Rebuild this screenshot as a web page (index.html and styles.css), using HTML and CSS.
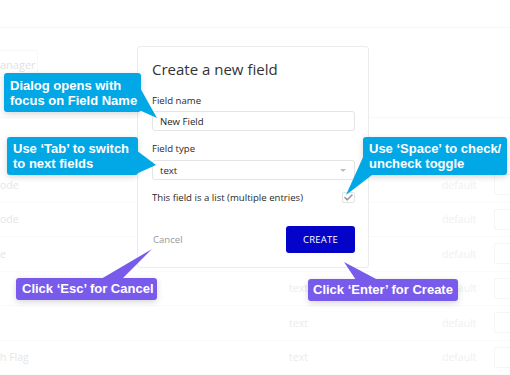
FILE: index.html
```html
<!DOCTYPE html>
<html>
<head>
<meta charset="utf-8">
<link rel="stylesheet" href="styles.css">
</head>
<body>
<div class="app">
  <div class="topbar"></div>
  <div class="filter"><span class="filter-box">anager</span></div>
  <div class="divider"></div>
  <div class="table">
    <div class="row"><span class="c-name">ode</span><span class="c-type">text</span><span class="c-def">default</span><span class="c-box"></span></div>
    <div class="row"><span class="c-name">ode</span><span class="c-type">text</span><span class="c-def">default</span><span class="c-box"></span></div>
    <div class="row"><span class="c-name">e</span><span class="c-type">text</span><span class="c-def">default</span><span class="c-box"></span></div>
    <div class="row"><span class="c-name"></span><span class="c-type">text</span><span class="c-def">default</span><span class="c-box"></span></div>
    <div class="row"><span class="c-name"></span><span class="c-type">text</span><span class="c-def">default</span><span class="c-box"></span></div>
    <div class="row"><span class="c-name">h Flag</span><span class="c-type">text</span><span class="c-def">default</span><span class="c-box"></span></div>
  </div>
</div>

<div class="dialog">
  <h1 class="dialog-title">Create a new field</h1>
  <div class="label">Field name</div>
  <div class="input">New Field</div>
  <div class="label label-gap">Field type</div>
  <div class="select"><span>text</span><span class="caret"></span></div>
  <div class="check-row">
    <span>This field is a list (multiple entries)</span>
    <span class="checkbox"><svg width="9" height="7" viewBox="0 0 9 7"><path d="M1 3.6 L3.4 5.8 L8 1" fill="none" stroke="#9a9a9a" stroke-width="1.6" stroke-linecap="round" stroke-linejoin="round"/></svg></span>
  </div>
  <div class="footer">
    <span class="cancel">Cancel</span>
    <span class="create">CREATE</span>
  </div>
</div>

<div class="callout blue c1">Dialog opens with<br>focus on Field Name</div>
<div class="callout blue c2">Use ‘Tab’ to switch<br>to next fields</div>
<div class="callout blue c3">Use ‘Space’ to check/<br>uncheck toggle</div>
<div class="callout purple c4">Click ‘Esc’ for Cancel</div>
<div class="callout purple c5">Click ‘Enter’ for Create</div>

<svg class="tails" width="510" height="375" viewBox="0 0 510 375">
  <polygon points="139,86 139,110 157,118" fill="#02a8e6"/>
  <polygon points="136,150 136,174 156,165" fill="#02a8e6"/>
  <polygon points="364,155 372,175 346,195" fill="#02a8e6"/>
  <polygon points="101,279 122,279 152,249" fill="#795bec"/>
  <polygon points="356,280 378,280 344,262" fill="#795bec"/>
</svg>
</body>
</html>
```
FILE: styles.css
```css
html, body {
  margin: 0;
  padding: 0;
}
body {
  width: 510px;
  height: 375px;
  overflow: hidden;
  background: #fff;
  position: relative;
  font-family: "Open Sans", "Noto Sans", sans-serif;
}

/* faded background app */
.app {
  color: #ebebeb;
  font-size: 10px;
}
.topbar {
  height: 27px;
  border-bottom: 1px solid #f6f6f6;
}
.filter {
  padding-top: 22px;
  height: 28px;
}
.filter-box {
  display: flex;
  align-items: center;
  width: 38px;
  height: 28px;
  box-sizing: border-box;
  border: 1px solid #f8f8f8;
  border-left: none;
  font-size: 11px;
  color: #e2e2e2;
  overflow: hidden;
  white-space: nowrap;
}
.divider {
  margin-top: 39px;
  border-bottom: 1px solid #f8f8f8;
}
.table {
  margin-top: 50px;
}
.row {
  display: grid;
  grid-template-columns: 289px 153px 52px 1fr;
  align-items: center;
  height: 34.5px;
  border-bottom: 1px solid #fafafa;
  box-sizing: border-box;
  font-size: 10.5px;
}
.c-name {
  color: #e6e6e6;
}
.c-def {
  color: #f0f0f0;
}
.c-box {
  height: 19px;
  border: 1px solid #f5f5f5;
  border-right: none;
  border-radius: 3px 0 0 3px;
}

/* dialog */
.dialog {
  position: absolute;
  left: 137px;
  top: 46px;
  width: 232px;
  box-sizing: border-box;
  padding: 12px 13px 14px 14px;
  border: 1px solid #ececec;
  border-radius: 3px;
  background: #fff;
  color: #2a2a2a;
  font-size: 9.6px;
}
.dialog-title {
  margin: 0 0 15px;
  font-size: 15px;
  line-height: 20px;
  font-weight: 400;
  color: #333;
}
.label {
  line-height: 14px;
}
.label-gap {
  margin-top: 11px;
}
.input, .select {
  display: flex;
  align-items: center;
  height: 20px;
  box-sizing: border-box;
  padding: 0 7px;
  border: 1px solid #e4e4e4;
  border-radius: 3px;
  color: #1e1e1e;
}
.input {
  margin-top: 3px;
}
.select {
  margin-top: 4px;
  justify-content: space-between;
  padding-right: 8px;
}
.caret {
  width: 0;
  height: 0;
  border-left: 3px solid transparent;
  border-right: 3px solid transparent;
  border-top: 3px solid #bdbdbd;
}
.check-row {
  margin-top: 10px;
  height: 14px;
  display: flex;
  align-items: center;
  justify-content: space-between;
}
.checkbox {
  width: 13px;
  height: 11px;
  box-sizing: border-box;
  border: 1px solid #e2e2e2;
  border-radius: 2px;
  display: flex;
  align-items: center;
  justify-content: center;
}
.footer {
  margin-top: 22px;
  display: flex;
  align-items: center;
  justify-content: space-between;
}
.cancel {
  color: #9a9a9a;
  padding-left: 1px;
}
.create {
  width: 69px;
  height: 27px;
  display: flex;
  align-items: center;
  justify-content: center;
  background: #0303c9;
  color: #fff;
  border-radius: 3px;
  font-size: 9.5px;
  letter-spacing: 0.2px;
}

/* callouts */
.callout {
  position: absolute;
  box-sizing: border-box;
  color: #fff;
  font-family: "Liberation Sans", Arial, sans-serif;
  font-weight: 700;
  font-size: 13px;
  white-space: nowrap;
  border-radius: 3px;
  box-shadow: 0 2px 6px rgba(0, 0, 0, 0.16);
}
.blue {
  background: #02a8e6;
  line-height: 15px;
}
.purple {
  background: #795bec;
  line-height: 16px;
  padding: 3px 6px;
  height: 22px;
}
.c1 {
  left: 4px;
  top: 73px;
  width: 137px;
  height: 39px;
  padding: 5px 6px 4px;
}
.c2 {
  left: 7px;
  top: 137px;
  width: 131px;
  height: 38px;
  padding: 4px 6px;
}
.c3 {
  left: 363px;
  top: 137px;
  width: 144px;
  height: 38px;
  padding: 4px 6px;
}
.c4 {
  left: 16px;
  top: 278px;
  width: 141px;
}
.c5 {
  left: 308px;
  top: 279px;
  width: 150px;
  padding-left: 5px;
}
.tails {
  position: absolute;
  left: 0;
  top: 0;
  pointer-events: none;
}
```
